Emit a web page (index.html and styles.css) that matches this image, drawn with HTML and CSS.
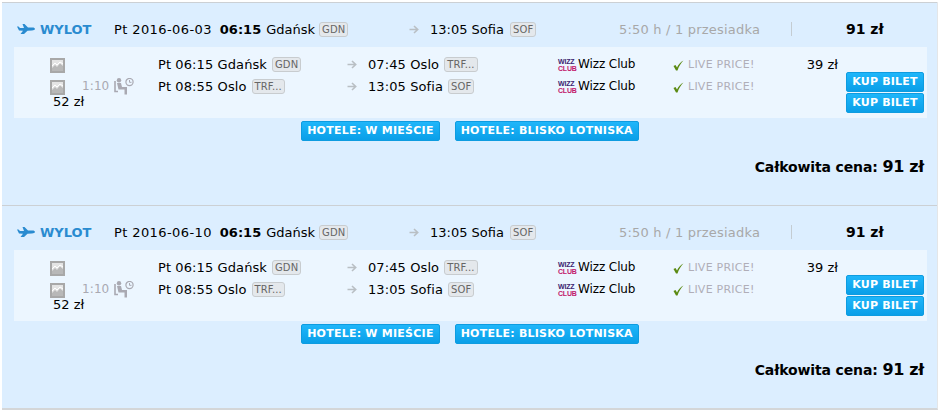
FILE: index.html
```html
<!DOCTYPE html>
<html>
  <head>
    <title>Wyniki lotów</title>
    <meta charset="UTF-8">
    <link rel="stylesheet" href="styles.css">
  </head>
  <body>
    <svg class="sprites" width="0" height="0">
      <symbol id="plane" viewBox="0 0 18 10">
        <path d="M0 2.5 L1.5 2.5 L3 4 L7 4 L5.5 0 L7.5 0 L11 3.5 L15.5 3.5 C17 3.5 18 4.2 18 5 C18 5.8 16.5 6.2 15 6.4 L10.5 6.8 L7 10 L3.5 10 L6 6.8 L2 6.6 Z" fill="#2a8bd0"/>
      </symbol>
      <symbol id="photo" viewBox="0 0 15 15">
        <rect x="0" y="0" width="15" height="15" fill="#a8a8a8"/>
        <rect x="2" y="2" width="11" height="11" fill="#e4e4e4"/>
        <path d="M2 10 L5 7 L7 9 L10 5.5 L13 8 L13 13 L2 13 Z" fill="#b8b8b8"/>
        <path d="M2 8 L5 5 L7 7 L10 4 L13 6" fill="none" stroke="#fff" stroke-width="1"/>
      </symbol>
      <symbol id="arrow" viewBox="0 0 10 9">
        <path d="M0.5 4.5 H8.5 M5 1 L8.7 4.5 L5 8" fill="none" stroke="#b9bfc4" stroke-width="1.6"/>
      </symbol>
      <symbol id="seat" viewBox="0 0 20 17">
        <circle cx="5" cy="2.2" r="2.2" fill="#a9a9b2"/>
        <path d="M3 5 L7 5 L8 9 L13 9 L13 16.5 L10.5 16.5 L10.5 11.5 L4.5 11.5 Z" fill="#a9a9b2"/>
        <path d="M1 3 L1 13.5 L4 13.5" stroke="#a9a9b2" stroke-width="1.6" fill="none"/>
        <circle cx="15.5" cy="4" r="3.6" fill="none" stroke="#a9a9b2" stroke-width="1.2"/>
        <path d="M15.5 2 V4.3 H17.5" fill="none" stroke="#a9a9b2" stroke-width="1"/>
      </symbol>
      <symbol id="check" viewBox="0 0 11 11">
        <path d="M0.5 6 L2.5 5 L4 7.5 C5.5 4.5 7.5 2 10.5 0.5 C8 3 5.8 6.5 4.5 10.5 L3 10.5 Z" fill="#5b8a12"/>
      </symbol>
    </svg>

    <div class="results">

      <div class="result">
        <div class="head">
          <div class="head-dir"><svg class="ico-plane"><use href="#plane"/></svg><span class="dir-name">WYLOT</span></div>
          <div class="head-dep"><span class="date">Pt 2016-06-03</span><b class="time">06:15</b><span>Gdańsk</span><span class="code">GDN</span></div>
          <div class="head-arrow"><svg class="ico-arrow"><use href="#arrow"/></svg></div>
          <div class="head-arr"><span>13:05 Sofia</span><span class="code">SOF</span></div>
          <div class="head-dur">5:50 h / 1 przesiadka</div>
          <div class="head-price">91 zł</div>
        </div>
        <div class="panel">
          <div class="legs">
            <div class="leg">
              <div class="leg-thumb"><svg class="ico-photo"><use href="#photo"/></svg></div>
              <div class="leg-from"><span>Pt 06:15 Gdańsk</span><span class="code">GDN</span></div>
              <div><svg class="ico-arrow"><use href="#arrow"/></svg></div>
              <div class="leg-to"><span>07:45 Oslo</span><span class="code">TRF...</span></div>
              <div class="leg-air"><span class="wizz"><span class="wizz-top">WIZZ</span><span class="wizz-bot">CLUB</span></span><span>Wizz Club</span></div>
              <div class="leg-live"><svg class="ico-check"><use href="#check"/></svg><span>LIVE PRICE!</span><span class="leg-price">39 zł</span></div>
            </div>
            <div class="leg">
              <div class="leg-thumb"><svg class="ico-photo"><use href="#photo"/></svg><span class="stop">1:10</span><svg class="ico-seat"><use href="#seat"/></svg></div>
              <div class="leg-from"><span>Pt 08:55 Oslo</span><span class="code">TRF...</span></div>
              <div><svg class="ico-arrow"><use href="#arrow"/></svg></div>
              <div class="leg-to"><span>13:05 Sofia</span><span class="code">SOF</span></div>
              <div class="leg-air"><span class="wizz"><span class="wizz-top">WIZZ</span><span class="wizz-bot">CLUB</span></span><span>Wizz Club</span></div>
              <div class="leg-live"><svg class="ico-check"><use href="#check"/></svg><span>LIVE PRICE!</span></div>
            </div>
            <div class="leg-fare">52 zł</div>
          </div>
          <div class="buy">
            <a class="btn">KUP BILET</a>
            <a class="btn">KUP BILET</a>
          </div>
        </div>
        <div class="hotels">
          <a class="btn btn-hotel">HOTELE: W MIEŚCIE</a>
          <a class="btn btn-hotel">HOTELE: BLISKO LOTNISKA</a>
        </div>
        <div class="total">Całkowita cena: <span class="total-num">91 zł</span></div>
      </div>

      <div class="result">
        <div class="head">
          <div class="head-dir"><svg class="ico-plane"><use href="#plane"/></svg><span class="dir-name">WYLOT</span></div>
          <div class="head-dep"><span class="date">Pt 2016-06-10</span><b class="time">06:15</b><span>Gdańsk</span><span class="code">GDN</span></div>
          <div class="head-arrow"><svg class="ico-arrow"><use href="#arrow"/></svg></div>
          <div class="head-arr"><span>13:05 Sofia</span><span class="code">SOF</span></div>
          <div class="head-dur">5:50 h / 1 przesiadka</div>
          <div class="head-price">91 zł</div>
        </div>
        <div class="panel">
          <div class="legs">
            <div class="leg">
              <div class="leg-thumb"><svg class="ico-photo"><use href="#photo"/></svg></div>
              <div class="leg-from"><span>Pt 06:15 Gdańsk</span><span class="code">GDN</span></div>
              <div><svg class="ico-arrow"><use href="#arrow"/></svg></div>
              <div class="leg-to"><span>07:45 Oslo</span><span class="code">TRF...</span></div>
              <div class="leg-air"><span class="wizz"><span class="wizz-top">WIZZ</span><span class="wizz-bot">CLUB</span></span><span>Wizz Club</span></div>
              <div class="leg-live"><svg class="ico-check"><use href="#check"/></svg><span>LIVE PRICE!</span><span class="leg-price">39 zł</span></div>
            </div>
            <div class="leg">
              <div class="leg-thumb"><svg class="ico-photo"><use href="#photo"/></svg><span class="stop">1:10</span><svg class="ico-seat"><use href="#seat"/></svg></div>
              <div class="leg-from"><span>Pt 08:55 Oslo</span><span class="code">TRF...</span></div>
              <div><svg class="ico-arrow"><use href="#arrow"/></svg></div>
              <div class="leg-to"><span>13:05 Sofia</span><span class="code">SOF</span></div>
              <div class="leg-air"><span class="wizz"><span class="wizz-top">WIZZ</span><span class="wizz-bot">CLUB</span></span><span>Wizz Club</span></div>
              <div class="leg-live"><svg class="ico-check"><use href="#check"/></svg><span>LIVE PRICE!</span></div>
            </div>
            <div class="leg-fare">52 zł</div>
          </div>
          <div class="buy">
            <a class="btn">KUP BILET</a>
            <a class="btn">KUP BILET</a>
          </div>
        </div>
        <div class="hotels">
          <a class="btn btn-hotel">HOTELE: W MIEŚCIE</a>
          <a class="btn btn-hotel">HOTELE: BLISKO LOTNISKA</a>
        </div>
        <div class="total">Całkowita cena: <span class="total-num">91 zł</span></div>
      </div>

    </div>
  </body>
</html>
```

FILE: styles.css
```css
html, body {
	margin: 0;
	padding: 0;
	background: #fff;
}

body {
	font-family: "DejaVu Sans", Verdana, sans-serif;
	font-size: 13px;
	color: #000;
	overflow: hidden;
}

.sprites {
	position: absolute;
}

.results {
	width: 935px;
	margin: 2px 0 0 2px;
	border-right: 1px solid #e4e6e8;
	border-bottom: 2px solid #d4d6d8;
}

.result {
	height: 202px;
	background: #dceeff;
	border-top: 1px solid #ccd0d4;
}

.head {
	box-sizing: border-box;
	display: flex;
	align-items: center;
	height: 44px;
	padding: 8px 0 0 15px;
}

.head-dir {
	display: flex;
	align-items: center;
	width: 97px;
}

.ico-plane {
	width: 18px;
	height: 10px;
	margin-right: 5px;
}

.dir-name {
	color: #2a8bd0;
	font-weight: bold;
}

.head-dep {
	display: flex;
	align-items: center;
	width: 295px;
}

.date {
	margin-right: 8px;
	letter-spacing: 0.4px;
}

.time {
	margin-right: 5px;
}

.code {
	margin-left: 5px;
	padding: 0 2px;
	height: 13px;
	line-height: 13px;
	font-size: 10px;
	letter-spacing: 0.1px;
	color: #666;
	background: #e4e8ec;
	border: 1px solid #c8cccf;
	border-radius: 3px;
}

.head-dep .code {
	margin-left: 4px;
}

.head-arr .code {
	margin-left: 6px;
}

.head-arrow {
	display: flex;
	width: 21px;
}

.ico-arrow {
	width: 10px;
	height: 9px;
}

.head-arr {
	display: flex;
	align-items: center;
	width: 189px;
}

.head-dur {
	width: 172px;
	color: #a8a8a8;
	letter-spacing: 0.2px;
}

.head-price {
	align-self: flex-start;
	height: 14px;
	margin-top: 11px;
	padding-left: 54px;
	line-height: 14px;
	border-left: 1px solid #c4ccd2;
	font-size: 14px;
	font-weight: bold;
}

.panel {
	display: flex;
	width: 913px;
	height: 71px;
	margin-left: 12px;
	background: #ecf6ff;
}

.legs {
	width: 824px;
	padding-top: 6px;
}

.leg {
	display: grid;
	grid-template-columns: 144px 189px 21px 190px 115px 165px;
	align-items: center;
	height: 22px;
	letter-spacing: 0.1px;
}

.leg-thumb {
	display: flex;
	align-items: center;
	padding-left: 36px;
}

.ico-photo {
	width: 15px;
	height: 15px;
	margin-top: 3px;
}

.stop {
	margin-left: 17px;
	font-size: 12px;
	color: #a9a9b2;
}

.ico-seat {
	width: 20px;
	height: 17px;
	margin-left: 5px;
}

.leg-from, .leg-to, .leg-air, .leg-live {
	display: flex;
	align-items: center;
}

.leg-air {
	font-size: 12px;
	letter-spacing: -0.1px;
}

.wizz {
	display: flex;
	flex-direction: column;
	width: 20px;
	margin-top: 2px;
	font-family: "Liberation Sans", sans-serif;
	font-size: 7px;
	font-weight: bold;
	line-height: 7px;
	letter-spacing: -0.2px;
}

.wizz-top {
	color: #3d2370;
}

.wizz-bot {
	color: #c2186b;
}

.leg-live {
	font-size: 11px;
	color: #b0aeb8;
	letter-spacing: 0.25px;
}

.ico-check {
	width: 11px;
	height: 11px;
	margin-top: 2px;
	margin-right: 4px;
}

.leg-price {
	margin-left: auto;
	font-size: 13px;
	color: #000;
	letter-spacing: 0;
}

.leg-fare {
	margin-top: -4px;
	padding-left: 39px;
	line-height: 18px;
}

.buy {
	display: flex;
	flex-direction: column;
	gap: 1px;
	margin: 25px 0 0 8px;
}

.btn {
	box-sizing: border-box;
	display: block;
	width: 78px;
	height: 20px;
	line-height: 18px;
	text-align: center;
	font-size: 11px;
	font-weight: bold;
	letter-spacing: 0.2px;
	color: #fff;
	background: linear-gradient(#1fb6fa, #0a9fe8);
	border: 1px solid #0e9ce0;
	border-radius: 2px;
}

.hotels {
	display: flex;
	justify-content: center;
	gap: 15px;
	margin-top: 3px;
	padding-left: 1px;
}

.btn-hotel {
	width: auto;
	padding: 0 5px;
	letter-spacing: 0.24px;
}

.total {
	margin-top: 16px;
	padding-right: 13px;
	line-height: 20px;
	text-align: right;
	font-size: 14px;
	font-weight: bold;
	letter-spacing: -0.14px;
}

.total-num {
	font-size: 16px;
	letter-spacing: -0.3px;
}
```
